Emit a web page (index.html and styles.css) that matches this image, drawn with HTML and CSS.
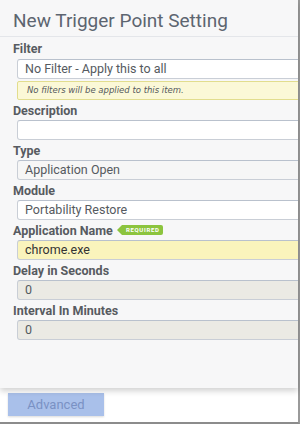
FILE: index.html
```html
<!DOCTYPE html>
<html lang="en">
<head>
    <meta charset="UTF-8" />
    <title>New Trigger Point Setting</title>
    <link rel="stylesheet" href="styles.css">
</head>
<body>
    <div class="frame">
        <div class="panel">
            <h1 class="title">New Trigger Point Setting</h1>

            <label class="field-label">Filter</label>
            <div class="input">No Filter - Apply this to all</div>
            <div class="note">No filters will be applied to this item.</div>

            <label class="field-label">Description</label>
            <div class="input"></div>

            <label class="field-label">Type</label>
            <div class="input input-muted">Application Open</div>

            <label class="field-label">Module</label>
            <div class="input">Portability Restore</div>

            <label class="field-label">Application Name <span class="badge">REQUIRED</span></label>
            <div class="input input-required">chrome.exe</div>

            <label class="field-label">Delay in Seconds</label>
            <div class="input input-disabled">0</div>

            <label class="field-label">Interval In Minutes</label>
            <div class="input input-disabled">0</div>
        </div>

        <button type="button" class="btn-advanced">Advanced</button>
    </div>
</body>
</html>
```

FILE: styles.css
```css
body {
    margin: 0;
    font-family: Roboto, "Liberation Sans", sans-serif;
    background: #fff;
}

.frame {
    width: 298px;
    height: 422px;
    border-right: 2px solid #9a9a9a;
    border-bottom: 2px solid #8c8c8c;
}

.panel {
    height: 388px;
    background: #f7f7f8;
    overflow: hidden;
    box-shadow: 0 3px 6px rgba(0, 0, 0, 0.18);
    position: relative;
    z-index: 1;
}

.title {
    margin: 0;
    height: 36px;
    line-height: 42px;
    padding-left: 13px;
    font-size: 19px;
    font-weight: 400;
    color: #5d6570;
    border-bottom: 1px solid #e4e6ea;
}

.field-label {
    display: flex;
    align-items: center;
    height: 16px;
    margin: 2px 0 2px 13px;
    font-size: 12.5px;
    font-weight: 700;
    color: #575b61;
}

.title + .field-label {
    margin-top: 3px;
    margin-bottom: 3px;
}

.input {
    box-sizing: border-box;
    height: 20px;
    width: 300px;
    margin-left: 17px;
    padding-left: 7px;
    line-height: 18px;
    font-size: 12.5px;
    color: #555a60;
    background: #fff;
    border: 1px solid #c9ced6;
    border-top-color: #b9c1cd;
    border-radius: 3px;
}

.input-muted {
    background: #f6f6f6;
}

.input-required {
    background: #faf4bc;
    color: #333;
}

.input-disabled {
    background: #ebeae4;
}

.note {
    box-sizing: border-box;
    height: 19px;
    width: 300px;
    margin: 2px 0 0 17px;
    padding-left: 9px;
    line-height: 17px;
    font-family: "DejaVu Sans", sans-serif;
    font-size: 8.5px;
    font-style: italic;
    color: #55585c;
    background: #fbf8d7;
    border: 1px solid #e2dd8e;
    border-radius: 2px;
}

.badge {
    position: relative;
    margin-left: 9px;
    height: 10px;
    line-height: 10px;
    padding: 0 3px 0 4px;
    font-size: 6px;
    font-weight: 700;
    letter-spacing: 0.7px;
    color: #fff;
    background: #8cc43e;
    border-radius: 0 2px 2px 0;
}

.badge::before {
    content: "";
    position: absolute;
    left: -5px;
    top: 0;
    border-top: 5px solid transparent;
    border-bottom: 5px solid transparent;
    border-right: 5px solid #8cc43e;
}

.btn-advanced {
    display: block;
    margin: 5px 0 0 8px;
    width: 96px;
    height: 23px;
    border: none;
    background: #a9c0ea;
    color: #7a91c4;
    font-family: Roboto, "Liberation Sans", sans-serif;
    font-size: 13px;
    box-shadow: 0 1px 2px rgba(0, 0, 0, 0.15);
}
```
